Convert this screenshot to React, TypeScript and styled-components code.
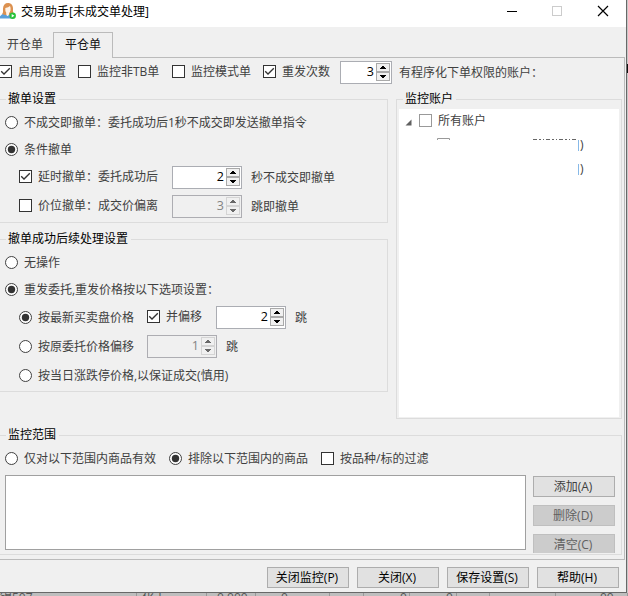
import React from 'react';
import styled, { createGlobalStyle, css } from 'styled-components';

const Global = createGlobalStyle`
  * { box-sizing: border-box; }
  html, body { margin: 0; padding: 0; overflow: hidden; }
  body { font: 12px/16px "Open Sans", "Noto Sans CJK SC", sans-serif; color: #404040; background: #c3c3c3; }
`;

const Desktop = styled.div`
  width: 628px; height: 596px; overflow: hidden; display: grid;
  grid-template: 593px 3px / 627px 1px; background: #c8c8c8;
`;
const Window = styled.main`
  width: 627px; height: 593px; background: #f0f0f0; display: flex; flex-direction: column;
  border-right: 1px solid #686868; border-bottom: 1px solid #686868;
`;
const TitleBar = styled.header`
  height: 27px; background: #fff; display: flex; align-items: center; color: #000; flex: none;
`;
const AppIcon = styled.svg`width: 16px; height: 20px; margin: 0 5px 7px 0; flex: none;`;
const Title = styled.h1`margin: 0; font: inherit; flex: 1; padding-bottom: 3px; white-space: nowrap;`;
const Controls = styled.svg`width: 110px; height: 22px; flex: none; margin: 0 11px 5px 0;`;
const Tabs = styled.nav`
  height: 31px; display: flex; align-items: flex-end; border-bottom: 1px solid #bbb; flex: none; width: 625px;
`;
const Tab = styled.button<{ $active?: boolean }>`
  font: inherit; padding: 0 3px 0 0; margin: 0; border: 0; background: #f0f0f0; white-space: nowrap; color: #404040;
  width: 53px; height: 25px;
  ${p => p.$active && css`width: 60px; height: 26px; color: #111; padding: 0 0 2px; border: 1px solid #bbb; border-bottom: 0; margin-bottom: -1px;`}
`;
const Page = styled.section`
  height: 502px; flex: none; width: 625px; border-right: 1px solid #bbb; border-bottom: 1px solid #bbb; overflow: hidden;
`;
const TopOptions = styled.div`height: 27px; display: flex; align-items: center;`;
const Columns = styled.div`display: grid; grid-template-columns: 388px 226px; column-gap: 8px; height: 340px;`;
const LeftColumn = styled.div`display: flex; flex-direction: column;`;
const Group = styled.fieldset<{ $h: number; $open?: boolean; $mt?: number }>`
  margin: ${p => p.$mt ?? 6}px 0 0; padding: 0; min-width: 0; height: ${p => p.$h}px; border: 1px solid #dcdcdc;
  ${p => p.$open && css`border-left: 0;`}
`;
const RangeGroup = styled(Group)`width: 622px;`;
const Legend = styled.legend`
  height: 16px; line-height: 16px; padding: 0 3px 0 2px; margin-left: 6px; color: #000;
`;
const Row = styled.div<{ $h: number; $indent?: number }>`
  display: flex; align-items: center; height: ${p => p.$h}px; padding-left: ${p => p.$indent ?? 5}px;
`;
const Choice = styled.label<{ $w?: number; $cut?: boolean; $drop?: boolean }>`
  display: flex; align-items: center; gap: 6px; white-space: nowrap; flex: none;
  ${p => p.$w && css`width: ${p.$w}px;`} ${p => p.$cut && css`margin-left: -1px;`}
  ${p => p.$drop && css`margin-top: 2px;`}
`;
const Caption = styled.span`height: 15px; line-height: 16px; white-space: nowrap;`;
const Square = styled.svg<{ $soft?: boolean }>`
  width: 13px; height: 13px; flex: none; border: 1px solid ${p => (p.$soft ? '#999' : '#333')}; background: #fff;
`;
const Round = styled.svg`width: 13px; height: 13px; flex: none;`;
const SpinBox = styled.div<{ $w: number; $off?: boolean }>`
  width: ${p => p.$w}px; height: 23px; flex: none; border: 1px solid ${p => (p.$off ? '#adadb2' : '#abadb3')};
  background: ${p => (p.$off ? '#f0f0f0' : '#fff')}; color: ${p => (p.$off ? '#838383' : '#000')};
  display: flex; justify-content: flex-end; align-items: center; padding-right: 1px; gap: 2px; margin-top: 2px;
`;
const SpinValue = styled.span`font-size: 12.5px; line-height: 16px; padding-bottom: 2px;`;
const SpinButtons = styled.svg`width: 14px; height: 19px; flex: none;`;
const Unit = styled.span<{ $gap: number }>`margin: 2px 0 0 ${p => p.$gap}px; white-space: nowrap; height: 15px; line-height: 16px;`;
const Tree = styled.div`height: 308px; margin: 2px 2px 0; background: #fff; overflow: hidden;`;
const TreeRoot = styled.div`height: 23px; display: flex; align-items: center; padding-left: 6px;`;
const Arrow = styled.svg`width: 7px; height: 7px; margin-right: 7px; margin-top: 3px;`;
const Remnants = styled.svg`display: block; width: 200px; height: 50px; margin-top: 5px;`;
const RangeBody = styled.div`display: flex; gap: 7px; padding: 1px 0 0 5px; height: 79px;`;
const RangeList = styled.div`width: 521px; height: 75px; border: 1px solid #a0a0a0; background: #fff;`;
const ButtonStack = styled.div`display: flex; flex-direction: column; gap: 8px; height: 78px; overflow: hidden; padding-top: 1px;`;
const Button = styled.button<{ $off?: boolean; $strong?: boolean }>`
  width: 82px; height: 21px; flex: none; padding: 1px 2px 0 0; font: inherit; line-height: 18px;
  border: 1px solid ${p => (p.$off ? '#bfbfbf' : '#adadad')}; background: ${p => (p.$off ? '#ccc' : '#e1e1e1')};
  color: ${p => (p.$off ? '#606060' : p.$strong ? '#000' : '#404040')};
`;
const Footer = styled.footer`display: flex; gap: 8px; padding: 7px 0 0 267px;`;
const Behind = styled.div`
  grid-row: 2; grid-column: 1 / 3; overflow: hidden; height: 3px; background: #bebebe; color: #555;
`;
const BehindRow = styled.div`
  display: grid; grid-template-columns: 137px 70px 49px 74px 34px 46px 47px 33px 66px 72px; height: 16px; line-height: 10px;
`;
const BehindCell = styled.span<{ $pad?: number }>`
  border-right: 1px solid #989898; padding-left: ${p => p.$pad ?? 0}px; white-space: nowrap;
`;
const Edge = styled.svg`width: 1px; height: 593px;`;

function Check({ on, soft }: { on?: boolean; soft?: boolean }) {
  return (
    <Square viewBox="0 0 11 11" $soft={soft}>
      {on && <path d="M1.2 5.3 4 8 9.8 2.2" fill="none" stroke="#333" strokeWidth="1.3" />}
    </Square>
  );
}
function Radio({ on }: { on?: boolean }) {
  return (
    <Round viewBox="0 0 13 13">
      <circle cx="6.5" cy="6.5" r="6" fill="#fff" stroke="#404040" />
      {on && <circle cx="6.5" cy="6.5" r="3.7" fill="#333" />}
    </Round>
  );
}
function Spinner({ value, width = 70, off }: { value: number; width?: number; off?: boolean }) {
  const line = off ? '#d4d4d4' : '#a9a9a9';
  const ink = off ? '#686868' : '#000';
  return (
    <SpinBox $w={width} $off={off}>
      <SpinValue>{value}</SpinValue>
      <SpinButtons viewBox="0 0 14 19" shapeRendering="crispEdges">
        <rect x=".5" y=".5" width="13" height="8" fill="#f0f0f0" stroke={line} />
        <rect x=".5" y="9.5" width="13" height="8" fill="#f0f0f0" stroke={line} />
        <path d="M6 3h2v1h1v1h1v1H4V5h1V4h1zM4 12h6v1H9v1H8v1H6v-1H5v-1H4z" fill={ink} />
      </SpinButtons>
    </SpinBox>
  );
}

const behindCells: { text: string; pad?: number }[] = [
  { text: '镍507', pad: -0 }, { text: '化工', pad: 5 }, { text: '0.000', pad: 10 }, { text: '0', pad: 25 }, { text: '' },
  { text: '0', pad: 36 }, { text: '0', pad: 36 }, { text: '' }, { text: '' }, { text: '00', pad: 44 },
];

export default function App() {
  return (
    <>
      <Global />
      <Desktop>
        <Window>
          <TitleBar>
            <AppIcon viewBox="0 0 16 20">
              <path d="M0 18.500v-2.300q2-2.400 4.500-2.700l3 2.500 2.500-2.200 2 1v3.700z" fill="#5a9fda" />
              <path d="M2 14c1.600-1 .800-3 1-5.500C3.200 5 5 3 8 3s5 2.200 5 5.500c0 2.500-.2 4 1.200 5.500l-3 1H5z" fill="#dc9150" />
              <path d="M5.300 8Q8.500 7.500 10 6q1 2 .5 4.500-.6 2-1.500 2.600v1.400L7.800 16 6.200 14.500v-1.700Q5 11.500 5.300 8z" fill="#fff3e6" />
              <circle cx="12.700" cy="15.700" r="3.200" fill="#27c23a" />
              <path d="m11.700 13.900 2.700 1.800-2.700 1.800z" fill="#fff" />
            </AppIcon>
            <Title>交易助手[未成交单处理]</Title>
            <Controls viewBox="0 0 110 22">
              <path d="M2 11.500h10" stroke="#000" shapeRendering="crispEdges" />
              <rect x="47.500" y="6.500" width="9" height="9" fill="none" stroke="#ccc" />
              <path d="m93 6 10 10M103 6 93 16" stroke="#000" strokeWidth="1.200" />
            </Controls>
          </TitleBar>
          <Tabs><Tab>开仓单</Tab><Tab $active>平仓单</Tab></Tabs>
          <Page>
            <TopOptions>
              <Choice $w={79} $cut><Check on /><Caption>启用设置</Caption></Choice>
              <Choice $w={94}><Check /><Caption>监控非TB单</Caption></Choice>
              <Choice $w={91}><Check /><Caption>监控模式单</Caption></Choice>
              <Choice $w={77}><Check on /><Caption>重发次数</Caption></Choice>
              <Spinner value={3} width={52} />
              <Unit $gap={7}>有程序化下单权限的账户：</Unit>
            </TopOptions>
            <Columns>
              <LeftColumn>
                <Group $h={132} $open>
                  <Legend>撤单设置</Legend>
                  <Row $h={31}><Choice><Radio /><Caption>不成交即撤单：委托成功后1秒不成交即发送撤单指令</Caption></Choice></Row>
                  <Row $h={23}><Choice><Radio on /><Caption>条件撤单</Caption></Choice></Row>
                  <Row $h={31} $indent={19}><Choice $w={153}><Check on /><Caption>延时撤单：委托成功后</Caption></Choice><Spinner value={2} /><Unit $gap={9}>秒不成交即撤单</Unit></Row>
                  <Row $h={27} $indent={19}><Choice $w={153}><Check /><Caption>价位撤单：成交价偏离</Caption></Choice><Spinner value={3} off /><Unit $gap={9}>跳即撤单</Unit></Row>
                </Group>
                <Group $h={161} $open $mt={8}>
                  <Legend>撤单成功后续处理设置</Legend>
                  <Row $h={31}><Choice><Radio /><Caption>无操作</Caption></Choice></Row>
                  <Row $h={23}><Choice><Radio on /><Caption>重发委托,重发价格按以下选项设置：</Caption></Choice></Row>
                  <Row $h={31} $indent={19}><Choice $w={128} $drop><Radio on /><Caption>按最新买卖盘价格</Caption></Choice><Choice $w={69}><Check on /><Caption>并偏移</Caption></Choice><Spinner value={2} /><Unit $gap={9}>跳</Unit></Row>
                  <Row $h={27} $indent={19}><Choice $w={128} $drop><Radio /><Caption>按原委托价格偏移</Caption></Choice><Spinner value={1} off /><Unit $gap={9}>跳</Unit></Row>
                  <Row $h={31} $indent={19}><Choice $drop><Radio /><Caption>按当日涨跌停价格,以保证成交(慎用)</Caption></Choice></Row>
                </Group>
              </LeftColumn>
              <Group $h={328}>
                <Legend>监控账户</Legend>
                <Tree>
                  <TreeRoot><Arrow viewBox="0 0 7 7"><path d="M6.500 .5v6H.5z" fill="#606060" /></Arrow><Choice><Check soft /><Caption>所有账户</Caption></Choice></TreeRoot>
                  <Remnants viewBox="0 0 200 50">
                    <path d="M38.500 3V1.500h12V3" fill="none" stroke="#999" />
                    <path d="M134 2.500h45" stroke="#666" strokeDasharray="4 2 2 2 1 2" />
                    <path d="M179.500 3v11M179.500 27v11" stroke="#87b9e8" />
                    <text x="181" y="12" fill="#404040">)</text>
                    <text x="181" y="36" fill="#404040">)</text>
                  </Remnants>
                </Tree>
              </Group>
            </Columns>
            <RangeGroup $h={128} $open $mt={2}>
              <Legend>监控范围</Legend>
              <Row $h={31}><Choice $w={164}><Radio /><Caption>仅对以下范围内商品有效</Caption></Choice><Choice $w={152}><Radio on /><Caption>排除以下范围内的商品</Caption></Choice><Choice><Check /><Caption>按品种/标的过滤</Caption></Choice></Row>
              <RangeBody><RangeList /><ButtonStack><Button>添加(A)</Button><Button $off>删除(D)</Button><Button $off>清空(C)</Button></ButtonStack></RangeBody>
            </RangeGroup>
          </Page>
          <Footer><Button $strong>关闭监控(P)</Button><Button $strong>关闭(X)</Button><Button $strong>保存设置(S)</Button><Button $strong>帮助(H)</Button></Footer>
        </Window>
        <Edge viewBox="0 0 1 593"><path d="M0 64h1v9H0z" fill="#111" /></Edge>
        <Behind>
          <BehindRow>{behindCells.map((c, i) => <BehindCell key={i} $pad={c.pad}>{c.text}</BehindCell>)}</BehindRow>
        </Behind>
      </Desktop>
    </>
  );
}
